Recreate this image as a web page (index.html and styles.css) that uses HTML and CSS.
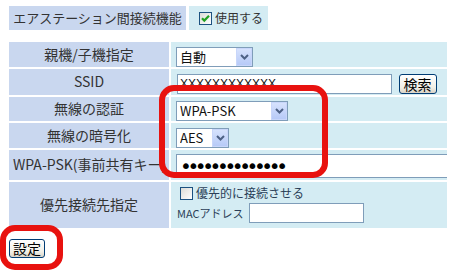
FILE: index.html
```html
<!DOCTYPE html>
<html lang="ja">
<head>
  <meta charset="UTF-8" />
  <title>エアステーション間接続</title>
  <link rel="stylesheet" href="styles.css">
</head>
<body>

  <table class="head-tbl">
    <tr>
      <th>エアステーション間接続機能</th>
      <td>
        <label class="chk">
          <span class="box">
            <svg width="11" height="11" viewBox="0 0 11 11"><path d="M2 5.2 L4.3 7.6 L9 2.8" fill="none" stroke="#21a121" stroke-width="2.2"/></svg>
          </span>使用する
        </label>
      </td>
    </tr>
  </table>

  <table class="form-tbl">
    <tr class="r-mode">
      <th>親機/子機指定</th>
      <td>
        <span class="sel">
          <select class="sel-mode"><option>自動</option></select>
          <span class="sel-btn"><svg width="9" height="6" viewBox="0 0 9 6"><path d="M1 1 L4.5 4.5 L8 1" fill="none" stroke="#4d6185" stroke-width="2"/></svg></span>
        </span>
      </td>
    </tr>
    <tr class="r-ssid">
      <th>SSID</th>
      <td>
        <input type="text" class="txt txt-ssid" value="XXXXXXXXXXXX">
        <button type="button" class="btn">検索</button>
      </td>
    </tr>
    <tr class="r-auth">
      <th>無線の認証</th>
      <td>
        <span class="sel">
          <select class="sel-auth"><option>WPA-PSK</option></select>
          <span class="sel-btn"><svg width="9" height="6" viewBox="0 0 9 6"><path d="M1 1 L4.5 4.5 L8 1" fill="none" stroke="#4d6185" stroke-width="2"/></svg></span>
        </span>
      </td>
    </tr>
    <tr class="r-enc">
      <th>無線の暗号化</th>
      <td>
        <span class="sel">
          <select class="sel-enc"><option>AES</option></select>
          <span class="sel-btn"><svg width="9" height="6" viewBox="0 0 9 6"><path d="M1 1 L4.5 4.5 L8 1" fill="none" stroke="#4d6185" stroke-width="2"/></svg></span>
        </span>
      </td>
    </tr>
    <tr class="r-psk">
      <th class="clip">WPA-PSK(事前共有キー)</th>
      <td>
        <input type="password" class="txt txt-psk" value="abcdefghijklmn">
      </td>
    </tr>
    <tr class="r-pref">
      <th>優先接続先指定</th>
      <td>
        <label class="chk pref-chk">
          <span class="box"></span>優先的に接続させる
        </label>
        <div class="mac-line">
          <span class="mac-label">MACアドレス</span>
          <input type="text" class="txt txt-mac">
        </div>
      </td>
    </tr>
  </table>

  <div class="submit-row">
    <button type="submit" class="btn">設定</button>
  </div>

  <!-- annotation marks -->
  <div class="mark mark-wpa"></div>
  <div class="mark mark-set"></div>

</body>
</html>
```

FILE: styles.css
```css
* {
  box-sizing: border-box;
}

html {
  overflow: hidden;
}

body {
  margin: 0;
  font-family: "Noto Sans CJK JP", sans-serif;
  color: #333;
  background: #fff;
  position: relative;
  width: 449px;
  height: 272px;
  overflow: hidden;
}

table {
  border-collapse: separate;
  table-layout: fixed;
}

th {
  font-weight: normal;
  background: #c9d7ef;
  text-align: center;
  white-space: nowrap;
  overflow: hidden;
  padding: 0 4px;
}

td {
  background: #d4ecf3;
  padding: 0 5px;
  white-space: nowrap;
  overflow: hidden;
}

/* header block */

.head-tbl {
  margin: 6px 0 0 6px;
  border-spacing: 3px 0;
}

.head-tbl th {
  width: 177px;
  height: 24px;
  font-size: 13px;
  line-height: 16px;
}

.head-tbl td {
  width: 76px;
  height: 24px;
  padding-left: 10px;
  font-size: 12px;
}

.chk {
  display: flex;
  align-items: center;
  gap: 3px;
  line-height: 14px;
  font-size: 12px;
}

.box {
  width: 13px;
  height: 13px;
  border: 1px solid #1c5180;
  background: linear-gradient(135deg, #dcdcd7, #fff);
  display: flex;
  align-items: center;
  justify-content: center;
}

/* main form */

.form-tbl {
  margin: 10px 0 0 7px;
  border-spacing: 2px;
  width: 442px;
}

.form-tbl th {
  width: 160px;
  font-size: 14px;
  line-height: 17px;
}

.form-tbl th.clip {
  text-align: left;
  padding-left: 4px;
}

.r-mode td, .r-mode th { height: 24px; }
.r-ssid td, .r-ssid th { height: 26px; }
.r-auth td, .r-auth th { height: 24px; }
.r-enc td, .r-enc th { height: 24px; }
.r-psk td, .r-psk th { height: 30px; }
.r-pref td, .r-pref th { height: 46px; }

.r-psk td {
  padding-right: 0;
}

.sel {
  display: inline-block;
  position: relative;
  vertical-align: middle;
}

select {
  appearance: none;
  -webkit-appearance: none;
  height: 20px;
  border: 1px solid #7f9db9;
  border-radius: 0;
  background: #fff;
  font-family: "Noto Sans CJK JP", sans-serif;
  font-size: 13px;
  color: #111;
  padding: 0 18px 0 3px;
  line-height: 18px;
  display: block;
}

.sel-mode { width: 77px; }
.sel-auth { width: 112px; }
.sel-enc { width: 53px; }

.sel-btn {
  position: absolute;
  top: 1px;
  right: 1px;
  bottom: 1px;
  width: 16px;
  background: linear-gradient(#d6e2fd, #b7caf7);
  border: 1px solid #c8d6fa;
  display: flex;
  align-items: center;
  justify-content: center;
  pointer-events: none;
}

.txt {
  border: 1px solid #7f9db9;
  background: #fff;
  font-family: "Noto Sans CJK JP", sans-serif;
  font-size: 12px;
  color: #111;
  padding: 0 3px;
  vertical-align: middle;
  margin: 0;
}

.txt-ssid {
  width: 215px;
  height: 20px;
  margin-left: 1px;
  font-family: "Liberation Sans", sans-serif;
  font-size: 12px;
  padding-left: 2px;
}

.txt-psk {
  width: 300px;
  height: 24px;
  font-family: "DejaVu Sans", sans-serif;
  font-size: 20px;
  letter-spacing: -4.4px;
  color: #000;
}

.txt-mac {
  width: 115px;
  height: 20px;
}

.btn {
  height: 20px;
  border: 1px solid #003c74;
  border-radius: 3px;
  background: linear-gradient(#fff, #f1efe6 70%, #d8d2c6);
  font-family: "Noto Sans CJK JP", sans-serif;
  font-size: 14px;
  line-height: 16px;
  color: #000;
  padding: 0 4px;
  vertical-align: middle;
  margin: 0 0 0 3px;
}

.pref-chk {
  margin-left: 4px;
  color: #2b3f58;
}

.mac-line {
  display: flex;
  align-items: center;
  gap: 5px;
  margin-top: 3px;
  margin-left: 1px;
}

.mac-label {
  font-size: 11px;
  color: #2b3f58;
}

.submit-row {
  display: flex;
  margin: 9px 0 0 9px;
}

.submit-row .btn {
  margin: 0;
  height: 19px;
  width: 36px;
  padding: 0;
}

/* red annotation frames */

.mark {
  position: absolute;
  border: 6px solid #e8120f;
  border-radius: 15px;
  pointer-events: none;
}

.mark-wpa {
  left: 159px;
  top: 85px;
  width: 169px;
  height: 93px;
}

.mark-set {
  left: 0;
  top: 225px;
  width: 63px;
  height: 45px;
}
```
